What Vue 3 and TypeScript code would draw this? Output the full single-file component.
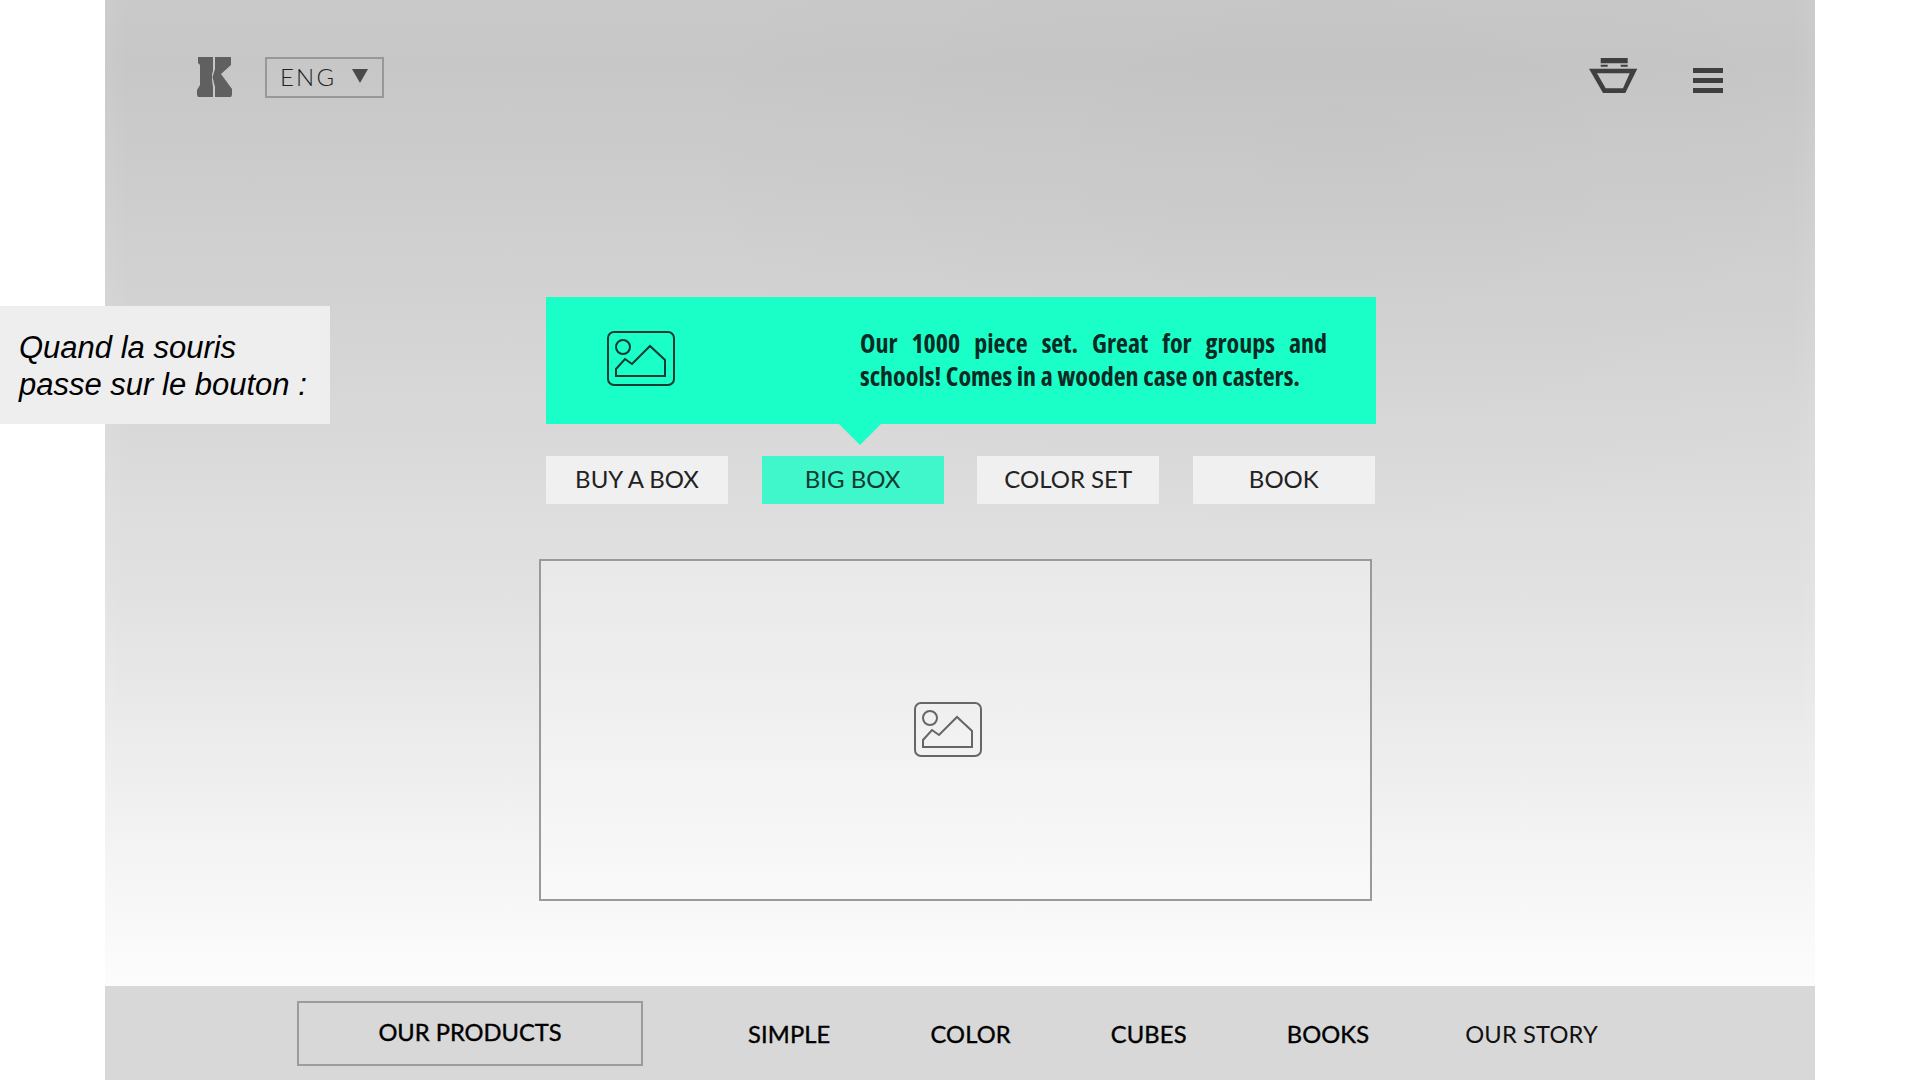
<script setup lang="ts">
const tabs = [
  { label: 'BUY A BOX', active: false },
  { label: 'BIG BOX', active: true },
  { label: 'COLOR SET', active: false },
  { label: 'BOOK', active: false }
];

const links = [
  { label: 'SIMPLE', light: false },
  { label: 'COLOR', light: false },
  { label: 'CUBES', light: false },
  { label: 'BOOKS', light: false },
  { label: 'OUR STORY', light: true }
];
</script>

<template>
  <div class="page">
    <div class="stage">
      <header class="top">
        <div class="top-left">
          <svg class="logo" viewBox="0 0 35 40" width="35" height="40">
            <path fill="#606060" d="M1 0H16V14L15 17V23L16 30V40H1L0 38V33L3 28V8L1 6Z" />
            <path fill="#606060" d="M18 0H34V8L24 17L35 32V38L34 40H18V30L15.5 20L18 12Z" />
          </svg>
          <div class="lang">
            <span>ENG</span>
            <i class="caret"></i>
          </div>
        </div>
        <div class="top-right">
          <svg class="cart" viewBox="0 0 49 35" width="49" height="35">
            <path fill="#3f3f3f" d="M11.7 0H38.7V5.3H11.7ZM11.7 6.7H18.7V8.7H11.7ZM31.7 6.7H38.7V8.7H31.7Z" />
            <path fill="#3f3f3f" fill-rule="evenodd" d="M0 10.7H48.3L36.3 35H14ZM8 15.3H40.7L34 30.3H16.7Z" />
          </svg>
          <div class="burger"><i></i><i></i><i></i></div>
        </div>
      </header>

      <section class="hero">
        <div class="banner">
          <svg class="pic" viewBox="0 0 68 55" width="68" height="55">
            <rect x="1" y="1" width="66" height="53" rx="6" />
            <circle cx="16" cy="16" r="7" />
            <path d="M9 45V38L18 28L25 33L43 15L58 29V45Z" />
          </svg>
          <p class="banner-text">Our 1000 piece set. Great for groups and schools! Comes in a wooden case on casters.</p>
          <i class="arrow"></i>
        </div>

        <div class="tabs">
          <div v-for="t in tabs" :key="t.label" class="tab" :class="{ active: t.active }">{{ t.label }}</div>
        </div>

        <div class="image-box">
          <svg class="pic grey" viewBox="0 0 68 55" width="68" height="55">
            <rect x="1" y="1" width="66" height="53" rx="6" />
            <circle cx="16" cy="16" r="7" />
            <path d="M9 45V38L18 28L25 33L43 15L58 29V45Z" />
          </svg>
        </div>
      </section>

      <footer class="bottom">
        <div class="products">OUR PRODUCTS</div>
        <nav class="links">
          <span v-for="l in links" :key="l.label" class="link" :class="{ light: l.light }">{{ l.label }}</span>
        </nav>
      </footer>
    </div>

    <div class="note">Quand la souris<br />passe sur le bouton :</div>
  </div>
</template>

<style>
html,
body {
  background: #fff;
}
</style>

<style scoped>
.page {
  position: relative;
  width: 1920px;
  height: 1080px;
  overflow: hidden;
  background: #fff;
  font-family: Lato, "Open Sans", sans-serif;
}

.stage {
  width: 1710px;
  height: 1080px;
  margin-left: 105px;
  display: flex;
  flex-direction: column;
  background:
    radial-gradient(ellipse 700px 420px at 72% 14%, rgba(0, 0, 0, 0.02), transparent),
    linear-gradient(180deg, #c9c9c9 0%, #c7c7c7 6%, #d2d2d2 27%, #d9d9d9 40%, #e2e2e2 56%, #ededed 70%, #f4f4f4 79%, #fcfcfc 91%);
  box-shadow: inset 30px 0 30px -25px rgba(255, 255, 255, 0.12), inset -30px 0 30px -25px rgba(255, 255, 255, 0.12);
}

/* header */
.top {
  height: 297px;
  box-sizing: border-box;
  padding: 57px 92px 0 92px;
  display: flex;
  justify-content: space-between;
  align-items: flex-start;
}

.top-left {
  display: flex;
  gap: 33px;
}

.lang {
  width: 119px;
  height: 41px;
  box-sizing: border-box;
  border: 2px solid #989898;
  padding: 0 0 2px 13px;
  display: flex;
  align-items: center;
  font-size: 24px;
  font-weight: 300;
  letter-spacing: 2.2px;
  color: #222;
}

.caret {
  margin-left: 16px;
  margin-top: -1px;
  border-left: 8px solid transparent;
  border-right: 8px solid transparent;
  border-top: 14px solid #4a4a4a;
}

.top-right {
  display: flex;
  gap: 55px;
  padding-top: 1px;
}

.burger {
  width: 30px;
  height: 25px;
  margin-top: 10px;
  display: flex;
  flex-direction: column;
  justify-content: space-between;
}

.burger i {
  height: 5px;
  background: #3f3f3f;
}

/* main */
.hero {
  flex: 1;
  display: flex;
  flex-direction: column;
  padding-left: 441px;
}

.banner {
  position: relative;
  width: 830px;
  height: 127px;
  background: #1affc8;
  display: flex;
  align-items: flex-start;
  padding: 34px 0 0 61px;
  box-sizing: border-box;
}

.pic {
  flex: none;
  fill: none;
  stroke: #0e3a31;
  stroke-width: 2;
}

.pic.grey {
  stroke: #666;
}

.banner-text {
  width: 467px;
  margin: -4px 0 0 185px;
  font-family: "Open Sans", sans-serif;
  font-stretch: 75%;
  font-weight: 700;
  font-size: 26px;
  line-height: 33px;
  text-align: justify;
  color: #0a2a24;
}

.arrow {
  position: absolute;
  left: 293px;
  top: 100%;
  border-left: 21px solid transparent;
  border-right: 21px solid transparent;
  border-top: 21px solid #1affc8;
}

.tabs {
  width: 829px;
  margin-top: 32px;
  display: grid;
  grid-template-columns: repeat(4, 182px);
  gap: 33.6px;
}

.tab {
  height: 48px;
  display: flex;
  align-items: center;
  justify-content: center;
  padding-bottom: 3px;
  box-sizing: border-box;
  background: #f0f0f0;
  font-size: 24px;
  color: #222;
}

.tab.active {
  background: #40f7cb;
  color: #123a31;
}

.image-box {
  width: 833px;
  height: 342px;
  margin: 55px 0 0 -7px;
  box-sizing: border-box;
  border: 2px solid #9a9a9a;
  background: rgba(255, 255, 255, 0.3);
  display: flex;
  align-items: center;
  justify-content: center;
  padding: 0 16px 2px 0;
}

/* footer */
.bottom {
  height: 94px;
  box-sizing: border-box;
  padding-left: 192px;
  display: flex;
  align-items: center;
  background: #d8d8d8;
}

.products {
  width: 346px;
  height: 65px;
  box-sizing: border-box;
  border: 2px solid #9c9c9c;
  display: flex;
  align-items: center;
  justify-content: center;
  padding-bottom: 2px;
  font-size: 23.7px;
  -webkit-text-stroke: 0.4px #000;
  color: #000;
}

.links {
  margin-left: 105px;
  display: flex;
  gap: 100px;
}

.link {
  font-size: 23.7px;
  letter-spacing: 0.15px;
  -webkit-text-stroke: 0.4px #000;
  color: #000;
  padding-top: 2px;
}

.link:last-child {
  margin-left: -4px;
}

.link.light {
  -webkit-text-stroke: 0;
  color: #111;
}

/* annotation over the mockup */
.note {
  position: absolute;
  left: 0;
  top: 306px;
  width: 330px;
  height: 118px;
  box-sizing: border-box;
  padding: 23px 0 0 19px;
  background: #eeeeee;
  font-family: "Liberation Sans", Arial, sans-serif;
  font-style: italic;
  font-size: 31px;
  line-height: 37px;
  color: #000;
}
</style>
